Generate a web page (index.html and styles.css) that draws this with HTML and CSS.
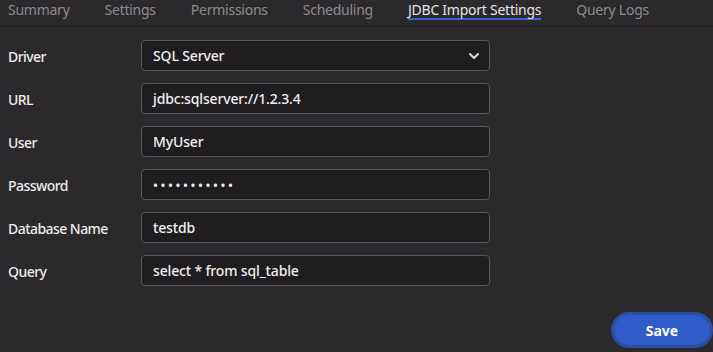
FILE: index.html
```html
<!DOCTYPE html>
<html lang="en">

<head>
    <meta charset="UTF-8">
    <title>JDBC Import Settings</title>
    <link rel="stylesheet" href="styles.css">
</head>

<body>

    <!-- Tabs -->
    <nav class="tabs">
        <a class="tab">Summary</a>
        <a class="tab">Settings</a>
        <a class="tab">Permissions</a>
        <a class="tab">Scheduling</a>
        <a class="tab active">JDBC Import Settings</a>
        <a class="tab">Query Logs</a>
    </nav>

    <!-- Form -->
    <div class="form">
        <label class="label">Driver</label>
        <div class="field select">
            <span>SQL Server</span>
            <svg class="chevron" width="12" height="8" viewBox="0 0 12 8">
                <path d="M2 2 L6 6 L10 2" fill="none" stroke="#d8d8d8" stroke-width="2" stroke-linecap="round" stroke-linejoin="round"/>
            </svg>
        </div>

        <label class="label">URL</label>
        <div class="field">jdbc:sqlserver://1.2.3.4</div>

        <label class="label">User</label>
        <div class="field">MyUser</div>

        <label class="label">Password</label>
        <div class="field password">•••••••••••</div>

        <label class="label">Database Name</label>
        <div class="field">testdb</div>

        <label class="label">Query</label>
        <div class="field">select * from sql_table</div>
    </div>

    <div class="actions">
        <button class="save">Save</button>
    </div>

</body>

</html>
```

FILE: styles.css
```css
body {
    font-family: "Noto Sans", sans-serif;
    background-color: #2b292c;
    color: #ececec;
    margin: 0;
    height: 352px;
    overflow: hidden;
}

.tabs {
    display: flex;
    gap: 35px;
    padding-left: 8px;
    height: 26px;
    border-bottom: 1px solid #1f1d20;
}

.tab {
    font-size: 14px;
    letter-spacing: -0.25px;
    color: #8d8b8e;
    line-height: 17px;
    height: 17px;
    padding-top: 1px;
}

.tab.active {
    color: #e4e4e4;
    border-bottom: 2px solid #3563d8;
}

.form {
    display: grid;
    grid-template-columns: 133px 349px;
    row-gap: 12px;
    padding: 13px 0 0 8px;
}

.label {
    box-sizing: border-box;
    font-size: 14px;
    font-weight: 500;
    letter-spacing: -0.55px;
    color: #ececec;
    display: flex;
    align-items: center;
    height: 31px;
    padding-top: 2px;
}

.field {
    box-sizing: border-box;
    height: 31px;
    background-color: #1f1d20;
    border: 1px solid #59575b;
    border-radius: 4px;
    padding: 0 11px;
    font-size: 14px;
    font-weight: 500;
    letter-spacing: -0.15px;
    color: #f0f0f0;
    display: flex;
    align-items: center;
}

.select {
    justify-content: space-between;
    padding-right: 9px;
}

.password {
    letter-spacing: 2.6px;
    font-size: 13px;
}

.actions {
    display: flex;
    justify-content: flex-end;
    margin-top: 26px;
}

.save {
    box-sizing: border-box;
    width: 102px;
    height: 36px;
    border: 3px solid #2c4e9e;
    border-radius: 18px;
    background-color: #2f5cc8;
    color: #fff;
    font-family: "Noto Sans", sans-serif;
    font-size: 14px;
    font-weight: 700;
}
```
